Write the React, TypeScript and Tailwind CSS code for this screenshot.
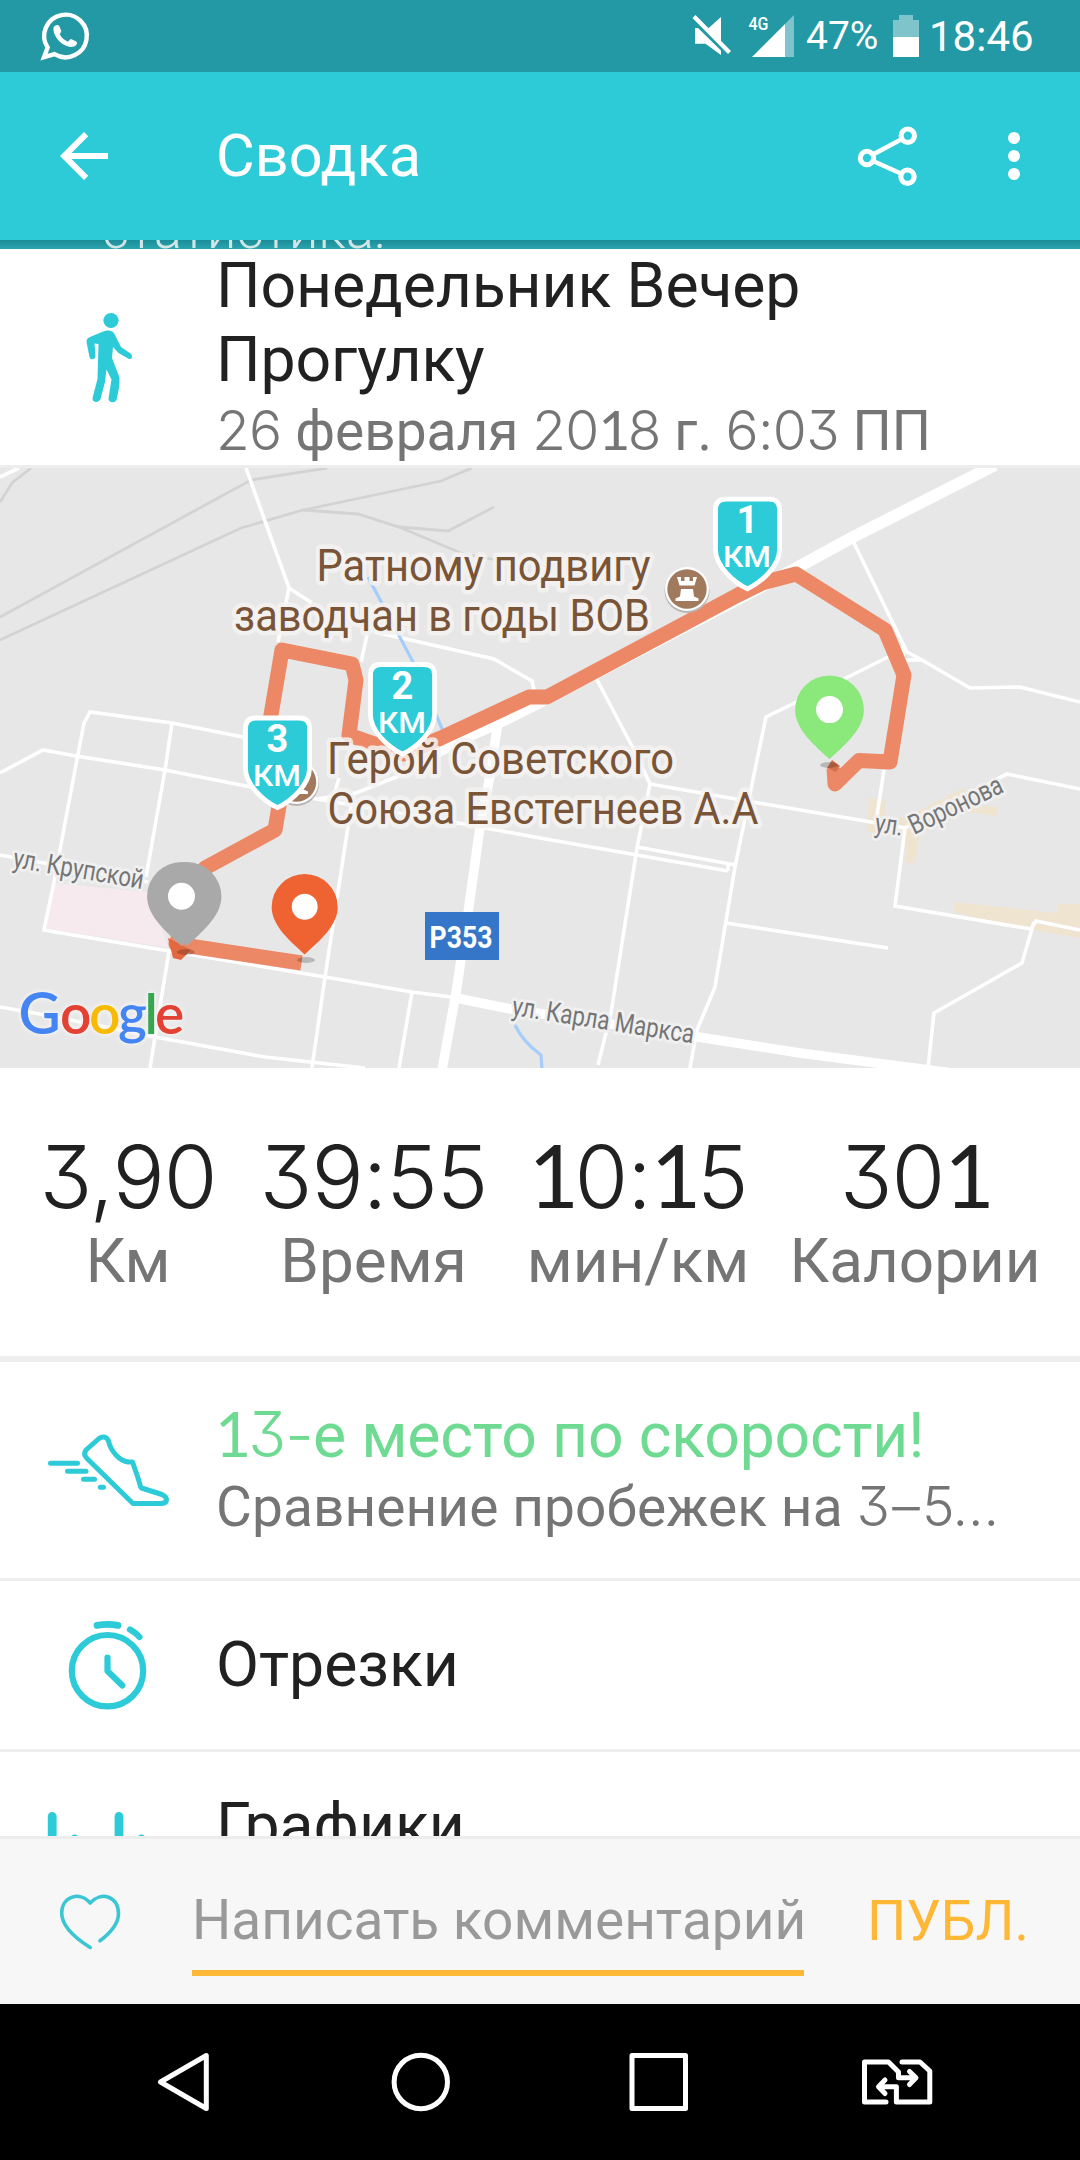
import { MdArrowBack } from "react-icons/md"

const STATS = [
  { value: "3,90", label: "Км", width: "w-[256px]" },
  { value: "39:55", label: "Время", width: "w-[235px]" },
  { value: "10:15", label: "мин/км", width: "w-[294px]" },
  { value: "301", label: "Калории", width: "w-[260px]" },
]

// Digits use a lighter face: flat-topped three, and a one with a slab foot
const Digits = ({ children }: { children: string }) => (
  <span className="font-['Inter'] font-light leading-none tracking-[-0.012em] [font-feature-settings:'cv09']">
    {children.split(/(1)/).map((part, i) =>
      part === "1" ? (
        <span key={i} className="font-['Lato'] font-normal leading-none tracking-[-0.05em]">1</span>
      ) : (
        part
      )
    )}
  </span>
)

const StatusBar = () => (
  <div className="flex h-[72px] shrink-0 items-center bg-[#2499a6] text-white">
    <svg width="54" height="72" viewBox="38 0 54 72" className="ml-[38px]">
      <path
        d="M47.6 47.5A21.3 21.3 0 1 1 54.5 54.2L44 57.2Z"
        fill="none"
        stroke="#fff"
        strokeWidth="4.4"
      />
      <path
        d="M53.5 27.5C55 24.5 58.5 24 59.5 26.5L61.3 31C61 33 59.5 33.6 59.8 34.6C61.5 38 64.5 40.3 67.6 41.5C69 41.8 69.5 39.3 71 39L76.3 41.4C78 43 76.5 46 73 46.8C65 48.3 52.5 38 53.5 27.5Z"
        fill="#fff"
      />
    </svg>
    <svg width="110" height="72" viewBox="689 0 110 72" className="ml-[597px]">
      <path d="M695 28H698L721 50.5V55L705.5 43.7H695Z" fill="#fff" />
      <path d="M721 17V44L707 29.5Z" fill="#fff" />
      <path d="M694 16.5L729.5 52.5" stroke="#fff" strokeWidth="4.2" />
      <path d="M794 15V57H785V24Z" fill="#fff" fillOpacity="0.42" />
      <path d="M785 24V57H752Z" fill="#fff" />
      <text x="748.500" y="30" fontSize="18.500" fontWeight="500" textLength="20" lengthAdjust="spacingAndGlyphs" fill="#fff" className="font-['Roboto']">
        4G
      </text>
    </svg>
    <span className="ml-[7px] w-[87px] text-[39px] leading-[74px]">47%</span>
    <svg width="26" height="72" viewBox="893 0 26 72">
      <path d="M899 15H913V20H919V37H893V20H899Z" fill="#fff" fillOpacity="0.42" />
      <path d="M893 37H919V57H893Z" fill="#fff" />
    </svg>
    <span className="ml-[10px] text-[42px] leading-[75px]">18:46</span>
  </div>
)

const AppBar = () => (
  <header className="flex h-[168px] shrink-0 items-center bg-[#2dcbd8] text-white">
    <MdArrowBack size={72} className="ml-12" />
    <h1 className="ml-[96px] w-[630px] pt-[2px] text-[59.5px]">Сводка</h1>
    <svg width="80" height="168" viewBox="846 72 80 168" fill="none" stroke="#fff">
      <path d="M873 154.5L902 139M873 161L902 174" strokeWidth="4.6" />
      <circle cx="867" cy="158" r="6.7" strokeWidth="5.1" />
      <circle cx="907.8" cy="135.7" r="6.7" strokeWidth="5.1" />
      <circle cx="907.5" cy="176.7" r="6.7" strokeWidth="5.1" />
    </svg>
    <svg width="20" height="168" viewBox="1004 72 20 168" fill="#fff" className="ml-[78px]">
      <circle cx="1014" cy="138" r="6" />
      <circle cx="1014" cy="156" r="6" />
      <circle cx="1014" cy="174" r="6" />
    </svg>
  </header>
)

const WalkIcon = () => (
  <svg width="219" height="216" viewBox="0 249 219 216" fill="#2dcbd8" className="shrink-0">
    <circle cx="111" cy="320.5" r="7.6" />
    <path d="M102 332C106 329.500 112 330 114 333L121 347L130.500 353.500C133.500 356 132 360.500 128 358.500L118.500 353L113 347L112 358L119.500 377.500C120 385 118 393 116.500 400C114.500 403.500 108.500 403 108.500 398.500L111.500 379.500L106.500 369.500L105 382L100.500 399C98.500 403.500 92 402.500 92.500 398L97.500 379L98.500 344L94.500 343.500L95.500 356C95 360.500 90 360 89.500 357L86.500 342C86.500 339 88 338 90 337Z" />
  </svg>
)

const ShoeIcon = () => (
  <svg width="219" height="216" viewBox="0 1362 219 216" fill="none" stroke="#2dcbd8" strokeWidth="5" strokeLinecap="round" strokeLinejoin="round" className="shrink-0">
    <path d="M86 1450L99 1438.500C103 1435.500 107 1437 108.500 1441C111 1452 120 1461 128 1462H132.500C134.500 1468 138 1477 140.500 1486.500L141.500 1488L162 1494.500C168 1497 168 1503.500 161.500 1503.500H133L87 1458.500C84.500 1456 84 1453 86 1450Z" />
    <path d="M50.500 1463.300H77.500M67.500 1471.300H86M83.500 1479.300H94.500M100.300 1487.300H103.500" />
  </svg>
)

const StopwatchIcon = () => (
  <svg width="219" height="168" viewBox="0 1581 219 168" fill="none" stroke="#2dcbd8" strokeWidth="6.200" strokeLinecap="round" strokeLinejoin="round" className="shrink-0">
    <circle cx="107.500" cy="1670.700" r="35.700" />
    <path d="M107.500 1657.500V1671L122.300 1685.500" />
    <path d="M97 1625.300Q107.500 1623.300 118 1625.300" strokeWidth="6.800" />
    <path d="M130 1629.500Q136 1633 139.500 1637" />
  </svg>
)

const ChartIcon = () => (
  <svg width="219" height="84" viewBox="0 1752 219 84" fill="none" stroke="#2dcbd8" strokeWidth="8.800" strokeLinecap="round" className="shrink-0">
    <path d="M52.200 1816.300V1850M119 1816.300V1850M74.700 1839V1850M141.500 1839V1850" />
  </svg>
)

const Pin = ({ x, y, scale = 1, color, hole = 0 }: { x: number; y: number; scale?: number; color: string; hole?: number }) => (
  <g transform={`translate(${x} ${y}) scale(${scale})`}>
    <path d="M0 0C-13 -12.500 -34.400 -29 -34.400 -49.500A34.400 34.400 0 0 1 34.400 -49.500C34.400 -29 13 -12.500 0 0Z" fill={color} />
    <circle cx={hole} cy="-49.700" r="13.500" fill="#fff" />
  </g>
)

const KmShield = ({ x, y, km }: { x: number; y: number; km: string }) => (
  <g transform={`translate(${x} ${y})`}>
    <path
      d="M-32 -82Q-32 -92.500 -21.500 -92.500H21.500Q32 -92.500 32 -82V-42C32 -26 14 -9.500 0 -2.800C-14 -9.500 -32 -26 -32 -42Z"
      fill="#2dcbd8"
      stroke="#fff"
      strokeWidth="4.800"
    />
    <g fill="#fff" textAnchor="middle">
      <text y="-58.500" fontSize="38" fontWeight="700">{km}</text>
      <text x="-0.500" y="-24.500" fontSize="29" fontWeight="500" textLength="48" lengthAdjust="spacingAndGlyphs">КМ</text>
    </g>
  </g>
)

const Monument = ({ x, y }: { x: number; y: number }) => (
  <g transform={`translate(${x} ${y})`}>
    <circle cy="1.500" r="22.500" fill="#b9b5b2" />
    <circle r="22" fill="#fff" />
    <circle r="19.700" fill="#a17a5e" />
    <path
      d="M-10 -12H-6V-8H-2.500V-12H2.500V-8H6V-12H10L7.500 -3.500H-7.500ZM-6 0H6L7 7.500L11.500 9.500V12H-11.500V9.500L-7 7.500Z"
      fill="#fff"
    />
  </g>
)

const RouteMap = () => (
  <svg width="1080" height="600" viewBox="0 468 1080 600" className="block shrink-0 font-['Roboto']">
    <rect y="468" width="1080" height="600" fill="#e7e7e7" />
    <path d="M53 883L148 892L169 948L45 928Z" fill="#f6eaee" />
    <g fill="#efe4d0">
      <path d="M869 798L886 800V817L905 818L965 787L968 799L970 805L998 807L996 816L968 812L920 834L915 863H906L904 834L867 832Z" />
      <path d="M955 902L1056 913L1058 904H1080V938L1032 930L953 912Z" />
    </g>

    <g fill="none" stroke="#d3d3d3" strokeWidth="2.800">
      <path d="M0 617L251 480L327 468" />
      <path d="M0 640L241 528L303 510L441 481L472 468" />
      <path d="M303 510L358 514L399 527L448 531L494 507" />
      <path d="M399 527L461 553L496 560" />
      <path d="M0 502L12 483L31 468" />
    </g>

    <g fill="none" stroke="#fff" strokeWidth="3.600">
      <path d="M0 477L19 468" />
      <path d="M246 468L289 588L278 642M289 588L312 603" />
      <path d="M367 635L361 662M374 632L406 639L494 659L532 681L534 690" />
      <path d="M0 773L43 750L76 756L165 770L246 786L317 799L458 823L540 838L728 871" />
      <path d="M243 737L172 723L90 712L84 723L75 770L53 887L44 930L169 951L325 977L412 992L451 997" />
      <path d="M172 723L165 770L146 877M0 855L148 882M169 951L150 1068" />
      <path d="M0 1007L45 1015L155 1037L265 1057L365 1068" />
      <path d="M339 778L334 795M317 799L356 793L396 777L450 750M352 800L325 977L312 1068M412 992L399 1068" />
      <path d="M596 678L633 748L650 784L637 848L611 1013L598 1065" />
      <path d="M650 784L753 802L877 823L905 828L1007 774L1080 789" />
      <path d="M888 657L846 678L766 717L757 760L735 867L715 987L697 1030L690 1068" />
      <path d="M637 847L736 865M728 864V871M726 923L888 948" />
      <path d="M854 543L907 652L922 660L970 688L1020 687L1080 702M903 645V660H922" />
      <path d="M884 770L876 822M905 828L895 906L1031 929L1036 921L1080 930M1034 922L1022 963L934 1013L928 1068" />
    </g>
    <g fill="none" stroke="#fff" strokeLinejoin="round">
      <path d="M995 465L853 537L780 577L740 598L540 702L498 723L430 752" strokeWidth="12" />
      <path d="M498 722L491 770L480 827L468 913L456 993L442 1070" strokeWidth="9.500" />
      <path d="M451 997L516 1010L698 1037L800 1053L960 1074" strokeWidth="9.500" />
    </g>
    <path d="M368 577L413 662L447 740M515 1025Q523 1042 541 1055L542 1070" fill="none" stroke="#a5cdfb" strokeWidth="3.200" />

    <path
      d="M834 768L835 784L859 760.500L890 762L904 675L885 630L796 574L762 583L738 595L547 697H529L441 738L403 754L349 735L356 680L352 664L282 650L262 768L284 776L275 830L205 868L176 944L301.500 963"
      fill="none"
      stroke="#ec8866"
      strokeWidth="15"
      strokeLinejoin="round"
    />
    <path d="M827 768L832 760L840 766L836 772Z" fill="#d5714f" />
    <path d="M168 938L173 958L181 960L191 950Z" fill="#e2683f" />
    <g fill="#000" fillOpacity="0.200">
      <ellipse cx="829" cy="765" rx="9" ry="3" />
      <ellipse cx="306" cy="960" rx="9" ry="3" />
      <ellipse cx="186" cy="952" rx="9" ry="3" />
    </g>

    <Monument x={687} y={589} />
    <Monument x={296.500} y={782} />

    <g fill="#795437" stroke="#f5f4f2" strokeOpacity="0.850" strokeWidth="9" strokeLinejoin="round" fontSize="45" style={{ paintOrder: "stroke" }}>
      <text x="316.500" y="581" textLength="334" lengthAdjust="spacingAndGlyphs">Ратному подвигу</text>
      <text x="234" y="631" textLength="416" lengthAdjust="spacingAndGlyphs">заводчан в годы ВОВ</text>
      <text x="327" y="774" textLength="347" lengthAdjust="spacingAndGlyphs">Герой Советского</text>
      <text x="327.500" y="824" textLength="431" lengthAdjust="spacingAndGlyphs">Союза Евстегнеев А.А</text>
    </g>
    <g fill="#757575" stroke="#f0f0f0" strokeWidth="6" strokeLinejoin="round" fontSize="27.500" style={{ paintOrder: "stroke" }}>
      <text transform="translate(12 867) rotate(9.600)" textLength="132" lengthAdjust="spacingAndGlyphs">ул. Крупской</text>
      <text transform="translate(511 1015) rotate(8.900)" textLength="184" lengthAdjust="spacingAndGlyphs">ул. Карла Маркса</text>
      <text transform="translate(874 832) rotate(8)" textLength="28" lengthAdjust="spacingAndGlyphs">ул.</text>
      <text transform="translate(914 835) rotate(-25.500)" textLength="101" lengthAdjust="spacingAndGlyphs">Воронова</text>
    </g>

    <rect x="425" y="912" width="74" height="48" fill="#3576c8" />
    <text x="429.500" y="948" fontSize="30.500" fontWeight="700" fill="#fff" textLength="63" lengthAdjust="spacingAndGlyphs">Р353</text>

    <text y="1033.500" fontSize="55" className="font-['Lato'] font-semibold [filter:drop-shadow(0_0_2px_#f3f3f3)_drop-shadow(0_0_2px_#f3f3f3)]">
      <tspan x="18.500" fontSize="58" fill="#4585f3">G</tspan>
      <tspan x="60" fill="#e34133">o</tspan>
      <tspan x="89" fill="#f8bb05">o</tspan>
      <tspan x="118" fill="#4585f3">g</tspan>
      <tspan x="144.500" fill="#36a751">l</tspan>
      <tspan x="155" fill="#e34133">e</tspan>
    </text>

    <KmShield x={747.500} y={591.700} km="1" />
    <KmShield x={402.500} y={757} km="2" />
    <KmShield x={277.500} y={810.500} km="3" />
    <Pin x={829.500} y={759.300} color="#8be97c" />
    <Pin x={187} y={946} color="#a9a9a9" hole={-5} />
    <Pin x={181.500} y={946} color="#a9a9a9" />
    <Pin x={304.700} y={954.500} scale={0.960} color="#ef6231" />
  </svg>
)

const Stats = () => (
  <section className="flex h-[288px] shrink-0 bg-white">
    {STATS.map((stat) => (
      <div key={stat.label} className={`${stat.width} flex shrink-0 flex-col items-center whitespace-nowrap pt-[58px]`}>
        <div className="h-[104px] text-[87px] leading-[104px] text-[#212121]">
          <Digits>{stat.value}</Digits>
        </div>
        <div className="mt-[-6px] text-[62px] leading-[74px] text-[#757575]">{stat.label}</div>
      </div>
    ))}
  </section>
)

const CommentBar = () => (
  <footer className="flex h-[168px] shrink-0 border-t-[3px] border-[#ededed] bg-[#f7f7f7]">
    <svg width="192" height="165" viewBox="0 1839 192 165" fill="none" stroke="#3cc6d3" strokeWidth="3.600" strokeLinecap="round" strokeLinejoin="round">
      <path d="M90.200 1947.500C75 1938 61.700 1926 61.700 1913C62 1896 80 1891 90.200 1903C101 1891 118.500 1896 118.500 1913.500C118.500 1924 109 1934 100 1940.800" />
    </svg>
    <div className="mt-[31px] h-[106px] w-[612px] border-b-[6px] border-[#ffb736]">
      <div className="whitespace-nowrap text-[55px] leading-[101px] text-[#999999]">Написать комментарий</div>
    </div>
    <div className="ml-[63px] mt-[31px] text-[55px] leading-[102px] text-[#ffb736]">ПУБЛ.</div>
  </footer>
)

const NavBar = () => (
  <nav className="h-[156px] shrink-0 bg-black">
    <svg width="1080" height="156" viewBox="0 2004 1080 156" fill="none" stroke="#fff" strokeWidth="5" strokeLinejoin="round" strokeLinecap="round">
      <path d="M160.500 2082L206.300 2055.500V2108.500Z" />
      <circle cx="420.800" cy="2082" r="26.700" />
      <rect x="632" y="2055.500" width="53.500" height="53" />
      <path d="M886 2102H864.500V2062H888.500L898.500 2072V2077.800H915M909.500 2071.500L916 2077.800L909.500 2084.500" />
      <path d="M902 2062H920L929.800 2071V2102H896.400V2086.700H880M885 2080L878.500 2086.700L885 2093.500" />
    </svg>
  </nav>
)

const App = () => (
  <div className="flex h-[2160px] w-[1080px] flex-col overflow-hidden bg-white font-['Roboto',sans-serif]">
    <StatusBar />
    <AppBar />
    <main className="flex h-[1596px] shrink-0 flex-col overflow-hidden">
      <div className="flex h-[9px] shrink-0 items-end overflow-hidden bg-linear-to-b from-[#1b8d97] to-[#29a5b0]">
        <div className="ml-[102px] h-[49px] text-[52px] font-light leading-[61px] tracking-[0.4px] text-[#cfe6e8]">статистика:</div>
      </div>
      <section className="flex h-[216px] shrink-0">
        <WalkIcon />
        <div className="-ml-[3px] whitespace-nowrap">
          <h2 className="text-[62.5px] leading-[74px] tracking-[-0.1px] text-[#212121]">
            Понедельник Вечер
            <br />
            Прогулку
          </h2>
          <p className="pt-px text-[55px] leading-[66px] text-[#757575]">
            <Digits>26</Digits> февраля <Digits>2018</Digits> г. <Digits>6:03</Digits> ПП
          </p>
        </div>
      </section>
      <div className="h-[3px] shrink-0 bg-[#ededed]" />
      <RouteMap />
      <Stats />
      <div className="h-[6px] shrink-0 bg-[#eeeeee]" />
      <section className="flex h-[216px] shrink-0">
        <ShoeIcon />
        <div className="-ml-[4px] whitespace-nowrap pt-[37px]">
          <h3 className="text-[62.5px] leading-[74px] tracking-[-0.2px] text-[#6fdb92]">
            <Digits>13-</Digits>е место по скорости!
          </h3>
          <p className="ml-[1px] pt-px text-[55px] leading-[66px] tracking-[0.1px] text-[#757575]">
            Сравнение пробежек на <Digits>3</Digits>
            <span className="px-[3px]">
              <Digits>–</Digits>
            </span>
            <Digits>5…</Digits>
          </p>
        </div>
      </section>
      <div className="h-[3px] shrink-0 bg-[#eeeeee]" />
      <section className="flex h-[168px] shrink-0 items-center">
        <StopwatchIcon />
        <h3 className="-ml-[3px] text-[62.5px] leading-[74px] text-[#212121]">Отрезки</h3>
      </section>
      <div className="h-[3px] shrink-0 bg-[#eeeeee]" />
      <section className="flex h-[84px] shrink-0 overflow-hidden">
        <ChartIcon />
        <h3 className="-ml-[3px] pt-[37px] text-[62.5px] leading-[74px] text-[#212121]">Графики</h3>
      </section>
    </main>
    <CommentBar />
    <NavBar />
  </div>
)

export default App
